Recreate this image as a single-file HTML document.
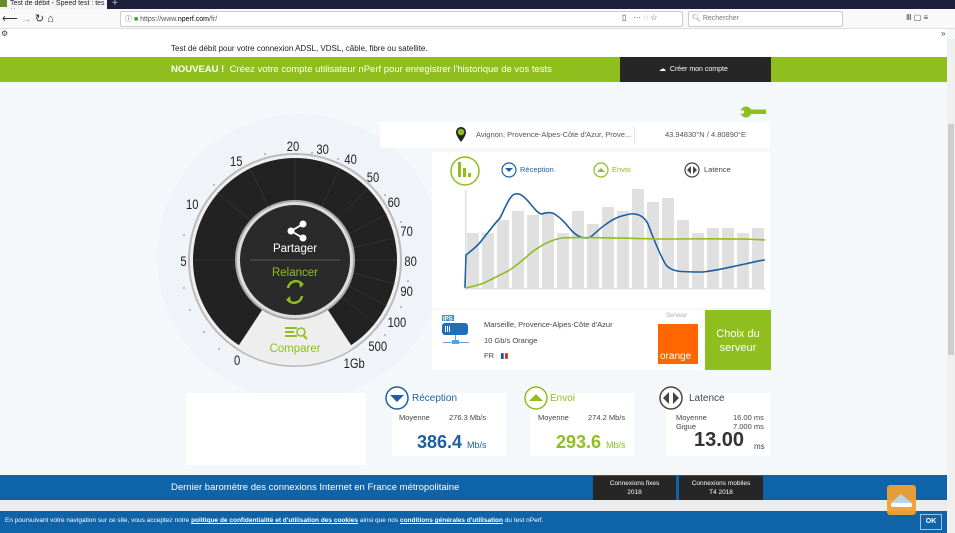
<!DOCTYPE html>
<html><head><meta charset="utf-8"><style>
*{margin:0;padding:0;box-sizing:border-box}
body{width:955px;height:533px;overflow:hidden;position:relative;font-family:"Liberation Sans",sans-serif;background:#f5f8fb;color:#333}
.a{position:absolute}
.t{font-size:8px;color:#444;white-space:nowrap}
</style></head><body>
<!-- browser chrome -->
<div class="a" style="left:0;top:0;width:955px;height:9px;background:#1e1f3d"></div>
<div class="a" style="left:0;top:0;width:107px;height:9px;background:#f5f6f7;font-size:7px;line-height:8px;color:#222;padding-left:10px">Test de débit - Speed test : tes ✕</div>
<div class="a" style="left:0;top:0;width:7px;height:7px;background:#6a8a2a"></div>
<div class="a" style="left:112px;top:-2px;color:#ccc;font-size:10px">+</div>
<div class="a" style="left:0;top:9px;width:955px;height:20px;background:#f9f9fa;border-bottom:1px solid #ddd"></div>
<div class="a t" style="left:2px;top:12px;font-size:11px;color:#333">⟵ <span style="color:#aaa">→</span> ↻ ⌂</div>
<div class="a" style="left:120px;top:11px;width:563px;height:16px;background:#fff;border:1px solid #ccc;border-radius:2px"></div>
<div class="a t" style="left:125px;top:14px;font-size:7px;color:#555">ⓘ <span style="color:#2a2">■</span> https://www.<b style="color:#000;font-weight:normal">nperf.com</b>/fr/</div>
<div class="a t" style="left:622px;top:13px;font-size:8px">▯ &nbsp; ··· ◌ ☆</div>
<div class="a" style="left:688px;top:11px;width:155px;height:16px;background:#fff;border:1px solid #ccc;border-radius:2px"></div>
<div class="a t" style="left:692px;top:14px;font-size:7px;color:#777">🔍︎ Rechercher</div>
<div class="a t" style="left:906px;top:13px;font-size:8px">Ⅲ ▢ ≡</div>
<div class="a" style="left:0;top:29px;width:947px;height:10px;background:#fff"></div>
<div class="a t" style="left:1px;top:29px;font-size:8px">⚙</div>
<div class="a t" style="left:941px;top:29px;font-size:8px">»</div>
<!-- scrollbar -->
<div class="a" style="left:947px;top:39px;width:8px;height:494px;background:#f0f0f0"></div>
<div class="a" style="left:948px;top:124px;width:6px;height:231px;background:#cdcdcd"></div>
<!-- page top -->
<div class="a" style="left:0;top:39px;width:947px;height:18px;background:#fff"></div>
<div class="a t" style="left:171px;top:44px;font-size:8px;color:#222">Test de débit pour votre connexion ADSL, VDSL, câble, fibre ou satellite.</div>
<div class="a" style="left:0;top:57px;width:947px;height:25px;background:#8fbe1f"></div>
<div class="a" style="left:171px;top:64px;font-size:9.5px;color:#fff;white-space:nowrap"><b>NOUVEAU !</b> &nbsp;Créez votre compte utilisateur nPerf pour enregistrer l'historique de vos tests</div>
<div class="a" style="left:620px;top:57px;width:151px;height:25px;background:#262626"></div>
<div class="a" style="left:659px;top:65px;font-size:7px;color:#fff;white-space:nowrap">☁ &nbsp;Créer mon compte</div>
<!-- wrench -->
<svg class="a" style="left:738px;top:104px" width="30" height="16"><circle cx="8" cy="8" r="5.5" fill="#8fbe1f"/><rect x="8" y="5.5" width="20" height="4.5" fill="#8fbe1f"/><rect x="0" y="6.5" width="6" height="3" fill="#f5f8fb"/></svg>
<!-- gauge backdrop -->
<svg class="a" style="left:140px;top:100px" width="310" height="300">
<circle cx="160" cy="157" r="143" fill="#f0f4f8"/>
</svg>
<!-- panels -->
<div class="a" style="left:380px;top:122px;width:390px;height:26px;background:#fff"></div>
<svg class="a" style="left:455px;top:126px" width="12" height="17"><path d="M6 1a5 5 0 0 1 5 5c0 4-5 10-5 10S1 10 1 6a5 5 0 0 1 5-5z" fill="#222"/><circle cx="6" cy="6" r="3.3" fill="#8fbe1f"/></svg>
<div class="a t" style="left:476px;top:130px;font-size:7.5px;color:#555">Avignon, Provence-Alpes-Côte d'Azur, Prove...</div>
<div class="a" style="left:634px;top:126px;width:1px;height:18px;background:#e5e5e5"></div>
<div class="a t" style="left:665px;top:130px;font-size:7.5px;color:#555">43.94830°N / 4.80890°E</div>
<div class="a" style="left:432px;top:152px;width:338px;height:156px;background:#fff"></div>
<svg class="a" style="left:432px;top:152px" width="338" height="156">
<circle cx="33" cy="19" r="14" fill="#fff" stroke="#8fbe1f" stroke-width="1.5"/>
<rect x="26" y="10" width="3" height="15" fill="#8fbe1f"/><rect x="31" y="16" width="3" height="9" fill="#8fbe1f"/><rect x="36" y="21" width="3" height="4" fill="#8fbe1f"/>
<circle cx="77" cy="18" r="7" fill="#fff" stroke="#1d5fa0" stroke-width="1.2"/><path d="M73 16h8l-4 4z" fill="#1d5fa0"/>
<text x="88" y="20" font-size="7.5" fill="#1d5fa0" font-family="Liberation Sans">Réception</text>
<circle cx="169" cy="18" r="7" fill="#fff" stroke="#8fbe1f" stroke-width="1.2"/><path d="M165 20h8l-4-4z" fill="#8fbe1f"/>
<text x="180" y="20" font-size="7.5" fill="#8fbe1f" font-family="Liberation Sans">Envoi</text>
<circle cx="260" cy="18" r="7" fill="#fff" stroke="#444" stroke-width="1.2"/><path d="M259 14v8l-4-4zM261 14v8l4-4z" fill="#444"/>
<text x="272" y="20" font-size="7.5" fill="#444" font-family="Liberation Sans">Latence</text>
<g fill="#e0e0e0" transform="translate(-432,-152)">
<rect x="467" y="233" width="12" height="55"/><rect x="482" y="233" width="12" height="55"/><rect x="497" y="220" width="12" height="68"/><rect x="512" y="211" width="12" height="77"/><rect x="527" y="215" width="12" height="73"/><rect x="542" y="212" width="12" height="76"/><rect x="557" y="233" width="12" height="55"/><rect x="572" y="211" width="12" height="77"/><rect x="587" y="224" width="12" height="64"/><rect x="602" y="207" width="12" height="81"/><rect x="617" y="211" width="12" height="77"/><rect x="632" y="189" width="12" height="99"/><rect x="647" y="202" width="12" height="86"/><rect x="662" y="198" width="12" height="90"/><rect x="677" y="220" width="12" height="68"/><rect x="692" y="233" width="12" height="55"/><rect x="707" y="228" width="12" height="60"/><rect x="722" y="228" width="12" height="60"/><rect x="737" y="233" width="12" height="55"/><rect x="752" y="228" width="12" height="60"/>
<rect x="465" y="190" width="1.5" height="99"/><rect x="465" y="288" width="300" height="1.5"/>
<path d="M465 288L466 255C472 250 478 246 482 240C490 230 496 222 500 218C506 206 510 195 515 194C521 193 524 197 528 201C534 208 538 214 542 214C548 212 552 212 556 215C562 219 566 224 572 231C578 237 582 238 587 238C592 238 597 230 605 225C614 218 620 216 630 214C640 213 645 218 648 224C654 240 660 255 666 265C672 272 680 272 703 272C720 270 730 267 745 264C755 262 760 260 765 260" fill="none" stroke="#1d5fa0" stroke-width="1.6"/>
<path d="M465 288C472 287 478 285 484 283C494 278 502 274 508 271C518 265 525 258 532 252C542 245 550 240 562 238C570 237 620 238 660 239C700 239 740 238 765 240" fill="none" stroke="#8fbe1f" stroke-width="1.6"/>
</g>
</svg>
<!-- server panel -->
<div class="a" style="left:432px;top:310px;width:273px;height:60px;background:#fff"></div>
<svg class="a" style="left:440px;top:314px" width="32" height="40"><rect x="2" y="1" width="12" height="6" fill="#3b8fd6"/><text x="3" y="6.5" font-size="6" fill="#fff" font-family="Liberation Sans" font-weight="bold">IPS</text><rect x="2" y="9" width="26" height="12" rx="3" fill="#1d6fb8"/><rect x="5" y="12" width="1" height="6" fill="#fff"/><rect x="7" y="12" width="1" height="6" fill="#fff"/><rect x="9" y="12" width="1" height="6" fill="#fff"/><rect x="15" y="21" width="1" height="7" fill="#5aa0e0"/><rect x="3" y="28" width="26" height="1" fill="#5aa0e0"/><rect x="12" y="26" width="7" height="4" fill="#5aa0e0"/></svg>
<div class="a t" style="left:484px;top:320px;font-size:7.5px">Marseille, Provence-Alpes-Côte d'Azur</div>
<div class="a t" style="left:484px;top:336px;font-size:7.5px">10 Gb/s Orange</div>
<div class="a t" style="left:484px;top:351px;font-size:7.5px">FR &nbsp;&nbsp;<span style="color:#1d4fa0">▮</span><span style="color:#d22">▮</span></div>
<div class="a t" style="left:666px;top:313px;font-size:6px;font-style:italic;color:#aaa">Serveur</div>
<div class="a" style="left:658px;top:324px;width:40px;height:40px;background:#ff6600"></div>
<div class="a" style="left:660px;top:351px;font-size:10px;color:#fff">orange</div>
<div class="a" style="left:705px;top:310px;width:66px;height:60px;background:#8fbe1f;color:#fff;font-size:11px;text-align:center;padding-top:17px;line-height:14px">Choix du<br>serveur</div>
<!-- gauge -->
<svg class="a" style="left:170px;top:125px" width="270" height="260">
<g transform="translate(125,135)">
<circle r="107" fill="#bbb"/><circle r="105" fill="#f0f0f0"/><circle r="102" fill="#222"/>
<path d="M0 0L-58 88A105 105 0 0 0 58 88Z" fill="#eeeeee"/>
<g stroke="#444" stroke-width="0.5">
<line x1="0" y1="-58" x2="0" y2="-102"/><line x1="-45" y1="-40" x2="-78" y2="-68"/><line x1="-58" y1="0" x2="-102" y2="0"/><line x1="58" y1="0" x2="102" y2="0"/><line x1="26" y1="-52" x2="45" y2="-92"/><line x1="42" y1="-40" x2="73" y2="-72"/><line x1="52" y1="-25" x2="92" y2="-46"/><line x1="52" y1="25" x2="92" y2="46"/><line x1="-26" y1="-52" x2="-45" y2="-92"/><line x1="56" y1="-12" x2="100" y2="-22"/><line x1="56" y1="12" x2="100" y2="24"/><line x1="46" y1="36" x2="80" y2="64"/>
</g>
<circle r="60" fill="#aaa"/><circle r="58" fill="#ddd"/><circle r="55" fill="#2a2a2a"/>
<line x1="-45" y1="0" x2="45" y2="0" stroke="#555" stroke-width="1"/>
<g fill="#fff"><circle cx="8" cy="-36" r="3.5"/><circle cx="-4" cy="-29" r="3.5"/><circle cx="8" cy="-22" r="3.5"/></g>
<path d="M8-36L-4-29L8-22" stroke="#fff" stroke-width="1.8" fill="none"/>
<text x="0" y="-8" text-anchor="middle" font-size="11.5" fill="#fff" font-family="Liberation Sans">Partager</text>
<text x="0" y="16" text-anchor="middle" font-size="11.5" fill="#8fbe1f" font-family="Liberation Sans">Relancer</text>
<path d="M-7 28A8 8 0 0 1 7 24M7 36A8 8 0 0 1 -7 40" stroke="#8fbe1f" stroke-width="2.5" fill="none"/>
<path d="M4 21l5 3-4 4zM-4 43l-5-3 4-4z" fill="#8fbe1f"/>
<g fill="#8fbe1f"><rect x="-10" y="67" width="12" height="2"/><rect x="-10" y="71" width="9" height="2"/><rect x="-10" y="75" width="12" height="2"/><circle cx="6" cy="72" r="4" fill="none" stroke="#8fbe1f" stroke-width="1.5"/><path d="M8 75l4 4" stroke="#8fbe1f" stroke-width="2"/></g>
<text x="0" y="92" text-anchor="middle" font-size="11.5" fill="#8fbe1f" font-family="Liberation Sans">Comparer</text>
</g>
<g font-family="Liberation Sans" font-size="14" fill="#222" transform="scale(0.8,1)">
<text x="80" y="240">0</text><text x="13" y="141">5</text><text x="20" y="84">10</text><text x="75" y="41">15</text><text x="146" y="26">20</text><text x="183" y="29">30</text><text x="218" y="39">40</text><text x="246" y="57">50</text><text x="272" y="82">60</text><text x="288" y="111">70</text><text x="293" y="141">80</text><text x="288" y="171">90</text><text x="272" y="202">100</text><text x="248" y="226">500</text><text x="217" y="243">1Gb</text>
</g>
<g fill="#aaa"><circle cx="95" cy="29" r="1"/><circle cx="44" cy="60" r="1"/><circle cx="14" cy="110" r="1"/><circle cx="14" cy="163" r="1"/><circle cx="20" cy="185" r="1"/><circle cx="34" cy="207" r="1"/><circle cx="49" cy="224" r="1"/><circle cx="142" cy="28" r="1"/><circle cx="168" cy="34" r="1"/><circle cx="215" cy="70" r="1"/><circle cx="231" cy="97" r="1"/><circle cx="238" cy="156" r="1"/><circle cx="231" cy="182" r="1"/><circle cx="215" cy="210" r="1"/></g>
</svg>
<!-- result cards -->
<div class="a" style="left:186px;top:393px;width:180px;height:72px;background:#fff"></div>
<div class="a" style="left:392px;top:393px;width:114px;height:63px;background:#fff"></div>
<div class="a" style="left:530px;top:393px;width:104px;height:63px;background:#fff"></div>
<div class="a" style="left:666px;top:393px;width:104px;height:63px;background:#fff"></div>
<svg class="a" style="left:384px;top:384px" width="400" height="30">
<circle cx="13" cy="14" r="11" fill="#fff" stroke="#1d5fa0" stroke-width="1.5"/><path d="M6 11h14l-7 7z" fill="#1d5fa0"/>
<circle cx="152" cy="14" r="11" fill="#fff" stroke="#8fbe1f" stroke-width="1.5"/><path d="M145 17h14l-7-7z" fill="#8fbe1f"/>
<circle cx="287" cy="14" r="11" fill="#fff" stroke="#444" stroke-width="1.5"/><path d="M285 8v12l-6-6zM289 8v12l6-6z" fill="#444"/>
</svg>
<div class="a" style="left:412px;top:393px;font-size:10px;color:#1d5fa0">Réception</div>
<div class="a" style="left:550px;top:393px;font-size:10px;color:#8fbe1f">Envoi</div>
<div class="a" style="left:689px;top:393px;font-size:10px;color:#444">Latence</div>
<div class="a t" style="left:399px;top:413px;font-size:7.5px">Moyenne</div><div class="a t" style="left:449px;top:413px;font-size:7.5px">276.3 Mb/s</div>
<div class="a t" style="left:538px;top:413px;font-size:7.5px">Moyenne</div><div class="a t" style="left:588px;top:413px;font-size:7.5px">274.2 Mb/s</div>
<div class="a t" style="left:676px;top:413px;font-size:7.5px;line-height:9px">Moyenne<br>Gigue</div><div class="a t" style="left:733px;top:413px;font-size:7.5px;line-height:9px;text-align:right">16.00 ms<br>7.000 ms</div>
<div class="a" style="left:417px;top:432px;font-size:18px;font-weight:bold;color:#1d5fa0;white-space:nowrap">386.4 <span style="font-size:9px;font-weight:normal">Mb/s</span></div>
<div class="a" style="left:556px;top:432px;font-size:18px;font-weight:bold;color:#8fbe1f;white-space:nowrap">293.6 <span style="font-size:9px;font-weight:normal">Mb/s</span></div>
<div class="a" style="left:694px;top:429px;font-size:20px;font-weight:bold;color:#333;white-space:nowrap">13.00</div>
<div class="a t" style="left:754px;top:442px;font-size:8px">ms</div>
<!-- bottom bars -->
<div class="a" style="left:0;top:475px;width:947px;height:25px;background:#0f63a8"></div>
<div class="a" style="left:171px;top:482px;font-size:9.5px;color:#fff;white-space:nowrap">Dernier baromètre des connexions Internet en France métropolitaine</div>
<div class="a" style="left:593px;top:476px;width:83px;height:24px;background:#262626;color:#fff;font-size:6.5px;text-align:center;line-height:9px;padding-top:3px">Connexions fixes<br>2018</div>
<div class="a" style="left:679px;top:476px;width:84px;height:24px;background:#262626;color:#fff;font-size:6.5px;text-align:center;line-height:9px;padding-top:3px">Connexions mobiles<br>T4 2018</div>
<div class="a" style="left:0;top:500px;width:947px;height:11px;background:#ececec"></div>
<div class="a" style="left:0;top:511px;width:947px;height:22px;background:#0f63a8"></div>
<div class="a" style="left:5px;top:517px;font-size:6.5px;color:#fff;white-space:nowrap">En poursuivant votre navigation sur ce site, vous acceptez notre <b><u>politique de confidentialité et d'utilisation des cookies</u></b> ainsi que nos <b><u>conditions générales d'utilisation</u></b> du test nPerf.</div>
<div class="a" style="left:920px;top:514px;width:22px;height:16px;border:1px solid #9cc3e6;color:#fff;font-size:7px;font-weight:bold;text-align:center;line-height:14px">OK</div>
<div class="a" style="left:887px;top:485px;width:29px;height:30px;background:#f0a030;border-radius:3px;opacity:.95"></div>
<svg class="a" style="left:887px;top:485px" width="29" height="30"><path d="M4 18L14 9L25 18Z" fill="#b8d4ea"/><rect x="4" y="18" width="21" height="4" rx="2" fill="#fff"/></svg>
</body></html>
